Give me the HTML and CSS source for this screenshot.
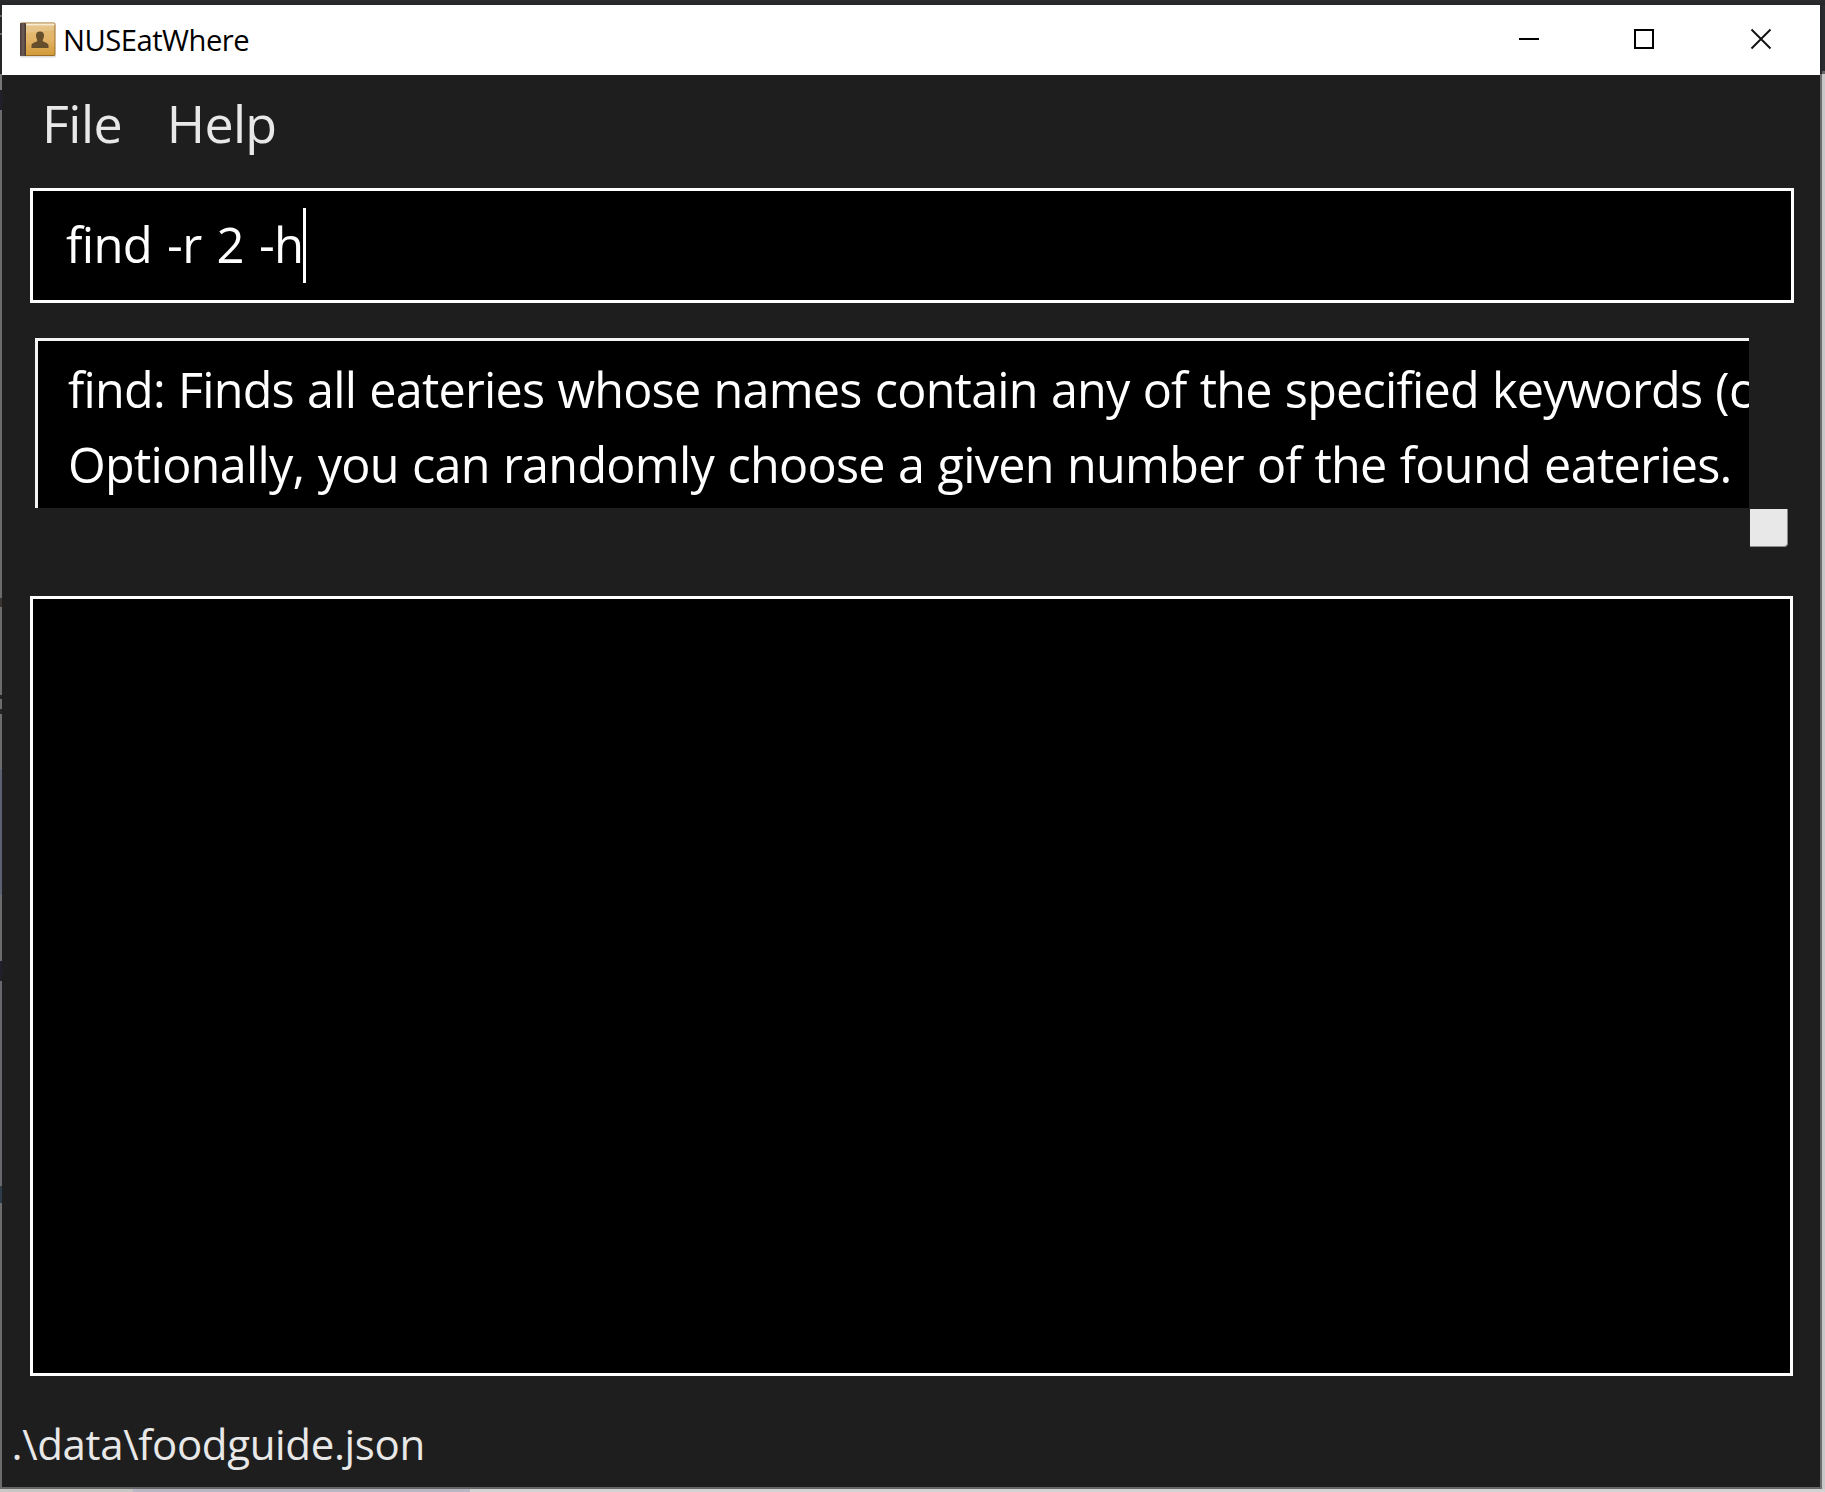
FILE: index.html
```
<!DOCTYPE html>
<html lang="en">
<head>
<meta charset="utf-8">
<title>NUSEatWhere</title>
<link rel="stylesheet" href="styles.css">
</head>
<body>
<div class="window">
  <header class="titlebar">
    <svg class="app-icon" width="38" height="38" viewBox="0 0 38 38">
      <defs>
        <linearGradient id="cover" x1="0" y1="0" x2="0" y2="1">
          <stop offset="0" stop-color="#e2bc78"/>
          <stop offset=".5" stop-color="#e3b468"/>
          <stop offset="1" stop-color="#d29a38"/>
        </linearGradient>
        <linearGradient id="spine" x1="0" y1="0" x2="1" y2="0">
          <stop offset="0" stop-color="#493936"/>
          <stop offset=".5" stop-color="#6e5d58"/>
          <stop offset="1" stop-color="#44342e"/>
        </linearGradient>
      </defs>
      <rect x="1" y="33" width="36" height="3.5" rx="1.5" fill="#000" opacity=".14"/>
      <rect x="1.5" y="2" width="34.500" height="32.500" rx="1" fill="url(#cover)" stroke="#9b6d24"/>
      <rect x="7" y="2.500" width="28.500" height="2" fill="#f7ecd6"/>
      <path d="M7 12V5h28v4z" fill="#fff" opacity=".16"/>
      <rect x="1" y="2" width="6" height="33" rx="1" fill="url(#spine)"/>
      <path d="M21 10.500c3 0 4.200 2 4 4.500-.2 2.500-1.300 3.300-1.300 4.500 0 2 5.800 1.800 5.800 5V27h-17v-2.500c0-3.200 5.800-3 5.800-5 0-1.200-1.100-2-1.300-4.500-.2-2.500 1-4.500 4-4.500z" fill="#644e2c"/>
    </svg>
    <span class="app-name">NUSEatWhere</span>
    <div class="controls">
      <svg width="22" height="22" viewBox="0 0 22 22"><path d="M1 11h20" stroke="#000" stroke-width="2"/></svg>
      <svg width="22" height="22" viewBox="0 0 22 22"><rect x="2" y="2" width="18" height="18" fill="none" stroke="#000" stroke-width="2"/></svg>
      <svg class="close" width="22" height="22" viewBox="0 0 22 22"><path d="M1.500 1.500l19 19M20.500 1.500l-19 19" stroke="#111" stroke-width="1.900"/></svg>
    </div>
  </header>
  <nav class="menu"><span class="menu-file">File</span><span class="menu-help">Help</span></nav>
  <div class="command"><span>find -r 2 -h</span><i class="caret"></i></div>
  <section class="help">
    <div class="help-text">
      <div class="help-first">find: Finds all eateries whose names contain any of the specified keywords (c</div>
      <div>Optionally, you can randomly choose a given number of the found eateries.</div>
    </div>
    <div class="scroll-corner"></div>
  </section>
  <main class="results"></main>
  <footer class="status">.\data\foodguide.json</footer>
</div>
</body>
</html>
```

FILE: styles.css
```
* { box-sizing: border-box; }

body {
  margin: 0;
  height: 1492px;
  padding: 5px 5px 3px 2px;
  overflow: hidden;
  font-family: "Open Sans", "Noto Sans", sans-serif;
  background:
    linear-gradient(#2b2c2e, #252628) 0 0 / 100% 5px no-repeat,
    linear-gradient(#c9c7c6, #c9c7c6) 0 1489px / 133px 3px no-repeat,
    linear-gradient(#b9b7c4, #b9b7c4) 133px 1489px / 337px 3px no-repeat,
    linear-gradient(#2b2c2e 0 71px, #666 71px 74px, #c8c8c8 74px) 100% 0 / 3px 1489px no-repeat,
    linear-gradient(#26272a 0 74px, #6d6d6d 74px) 1820px 0 / 2px 1489px no-repeat,
    linear-gradient(
      #27282a 0 15px, #66676a 15px 17px, #27282a 17px 33px, #66676a 33px 35px,
      #242527 35px 74px, #777 74px 90px, #20202c 90px 110px, #6c6c6e 110px 598px,
      #3b3532 598px 607px, #6c6c6c 607px 695px, #262420 695px 699px, #6c6c6c 699px 709px,
      #262420 709px 714px, #6c6c6c 714px 769px, #5c6272 769px 895px, #6c6c6c 895px 961px,
      #20202c 961px 981px, #68686c 981px 1186px, #2e3c4a 1186px 1203px, #6c6c6c 1203px
    ) 0 0 / 2px 1489px no-repeat,
    #d2d2d2;
}

.window {
  height: 1484px;
  display: flex;
  flex-direction: column;
  background: #1e1e1e;
  border-bottom: 2px solid #666;
}

.titlebar {
  flex: none;
  display: flex;
  align-items: center;
  height: 70px;
  padding: 0 48px 0 17px;
  background: #fff;
  color: #000;
}

.app-name {
  margin-left: 6px;
  font-size: 29.2px;
  line-height: 70px;
  letter-spacing: -.5px;
}

.controls {
  display: flex;
  gap: 93px;
  margin-left: auto;
  padding-bottom: 2px;
}

.close { margin-left: 2px; }

.menu {
  flex: none;
  display: flex;
  gap: 44.5px;
  height: 96px;
  padding-left: 40px;
  font-size: 52px;
  line-height: 96px;
  color: #e8e8e8;
}

.menu-file { letter-spacing: -.5px; }
.menu-help { letter-spacing: -.7px; }

.command {
  flex: none;
  display: flex;
  height: 115px;
  margin: 17px 26px 0 28px;
  padding-left: 33px;
  border: 3px solid #fff;
  background: #000;
  color: #fff;
  font-size: 49px;
  line-height: 106px;
  letter-spacing: -.7px;
  word-spacing: 3px;
}

.caret {
  flex: none;
  width: 3px;
  height: 75px;
  margin: 17px 0 0 0;
  background: #fff;
}

.help {
  flex: none;
  display: grid;
  grid-template-columns: 1714px 38px;
  grid-template-rows: 170px 38px;
  gap: 1px;
  margin: 35px 0 0 33px;
}

.help-text {
  overflow: hidden;
  padding: 11px 0 0 30px;
  border: solid #f4f4f4;
  border-width: 3px 0 0 3px;
  background: #000;
  color: #fff;
  font-size: 48.5px;
  line-height: 75px;
  letter-spacing: -.7px;
  word-spacing: 1.3px;
  white-space: nowrap;
}

.help-first { letter-spacing: -.77px; }

.scroll-corner {
  grid-area: 2 / 2;
  border: solid #8a8a8a;
  border-width: 0 1px 1px 0;
  border-bottom-right-radius: 4px;
  background: #e8e8e8;
}

.results {
  flex: none;
  height: 780px;
  margin: 49px 27px 0 28px;
  border: 3px solid #fff;
  background: #000;
}

.status {
  flex: none;
  height: 110px;
  margin-top: 13px;
  padding-left: 9.5px;
  font-size: 42px;
  line-height: 110px;
  letter-spacing: -.35px;
  color: #e8e8e8;
}
```
